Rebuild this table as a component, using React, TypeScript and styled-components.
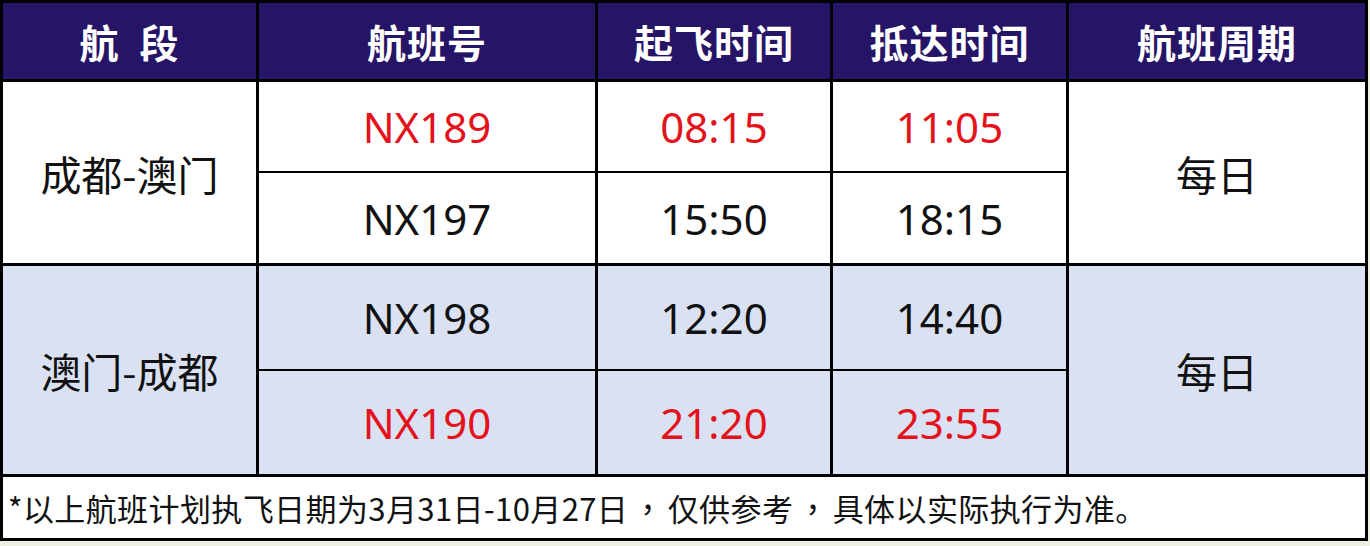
import styled, { createGlobalStyle } from 'styled-components';

const GlobalStyle = createGlobalStyle`
    html, body {
        margin: 0;
        padding: 0;
        background: #eef1e2;
    }
    body {
        font-family: "Noto Sans", "Noto Sans CJK SC", sans-serif;
    }
`

const Schedule = styled.table`
    width: 1368px;
    border-collapse: collapse;
    table-layout: fixed;
    border: 3px solid #000;
    background: #fff;
`
const HeadCell = styled.th`
    height: 76px;
    padding: 0;
    background: #261466;
    color: #fff;
    font-family: "Noto Sans CJK SC", sans-serif;
    font-weight: 700;
    font-size: 39px;
    letter-spacing: 1px;
    word-spacing: 10px;
    text-align: center;
    vertical-align: middle;
    border: 3px solid #000;
`
const Cell = styled.td<{ $shade?: boolean; $thin?: 'top' | 'bottom'; $h: number }>`
    height: ${p => p.$h}px;
    padding: 0;
    text-align: center;
    vertical-align: middle;
    background: ${p => (p.$shade ? '#d9e1f2' : '#fff')};
    border-left: 3px solid #000;
    border-right: 3px solid #000;
    border-top: ${p => (p.$thin === 'bottom' ? '2px' : '3px')} solid #000;
    border-bottom: ${p => (p.$thin === 'top' ? '2px' : '3px')} solid #000;
`
const Route = styled.span`
    font-family: "Noto Sans CJK SC", sans-serif;
    font-size: 41px;
    color: #111;
`
const Value = styled.span<{ $red?: boolean }>`
    font-family: "Noto Sans", sans-serif;
    font-size: 42px;
    color: ${p => (p.$red ? '#e3121b' : '#111')};
`
const NoteCell = styled.td`
    height: 61px;
    padding: 0 0 0 5px;
    text-align: left;
    vertical-align: middle;
    background: #fff;
    border: 3px solid #000;
    font-family: "Noto Sans CJK SC", sans-serif;
    font-size: 31px;
    letter-spacing: 0.4px;
    color: #111;
    white-space: nowrap;
`
// centred full-width comma, as in the source image
const Punct = styled.span`
    font-family: "Noto Sans CJK TC", sans-serif;
    margin: 0 4px;
`

type Flight = { no: string; dep: string; arr: string; red: boolean }

const groups: { route: string; shade: boolean; flights: Flight[] }[] = [
    {
        route: '成都-澳门',
        shade: false,
        flights: [
            { no: 'NX189', dep: '08:15', arr: '11:05', red: true },
            { no: 'NX197', dep: '15:50', arr: '18:15', red: false },
        ],
    },
    {
        route: '澳门-成都',
        shade: true,
        flights: [
            { no: 'NX198', dep: '12:20', arr: '14:40', red: false },
            { no: 'NX190', dep: '21:20', arr: '23:55', red: true },
        ],
    },
]

const heights = [[89, 90], [103, 103]]

export default function App() {
    return (
        <>
            <GlobalStyle />
            <Schedule>
                <colgroup>
                    <col style={{ width: 256 }} />
                    <col style={{ width: 339 }} />
                    <col style={{ width: 235 }} />
                    <col style={{ width: 236 }} />
                    <col style={{ width: 299 }} />
                </colgroup>
                <thead>
                    <tr>
                        <HeadCell>航 段</HeadCell>
                        <HeadCell>航班号</HeadCell>
                        <HeadCell>起飞时间</HeadCell>
                        <HeadCell>抵达时间</HeadCell>
                        <HeadCell>航班周期</HeadCell>
                    </tr>
                </thead>
                <tbody>
                    {groups.map((g, gi) =>
                        g.flights.map((f, fi) => {
                            const thin = fi === 0 ? 'top' : 'bottom'
                            const h = heights[gi][fi]
                            return (
                                <tr key={f.no}>
                                    {fi === 0 && (
                                        <Cell rowSpan={2} $shade={g.shade} $h={h}>
                                            <Route>{g.route}</Route>
                                        </Cell>
                                    )}
                                    <Cell $shade={g.shade} $thin={thin} $h={h}>
                                        <Value $red={f.red}>{f.no}</Value>
                                    </Cell>
                                    <Cell $shade={g.shade} $thin={thin} $h={h}>
                                        <Value $red={f.red}>{f.dep}</Value>
                                    </Cell>
                                    <Cell $shade={g.shade} $thin={thin} $h={h}>
                                        <Value $red={f.red}>{f.arr}</Value>
                                    </Cell>
                                    {fi === 0 && (
                                        <Cell rowSpan={2} $shade={g.shade} $h={h}>
                                            <Route>每日</Route>
                                        </Cell>
                                    )}
                                </tr>
                            )
                        })
                    )}
                    <tr>
                        <NoteCell colSpan={5}>
                            *以上航班计划执飞日期为3月31日-10月27日<Punct>，</Punct>仅供参考<Punct>，</Punct>具体以实际执行为准。
                        </NoteCell>
                    </tr>
                </tbody>
            </Schedule>
        </>
    )
}
